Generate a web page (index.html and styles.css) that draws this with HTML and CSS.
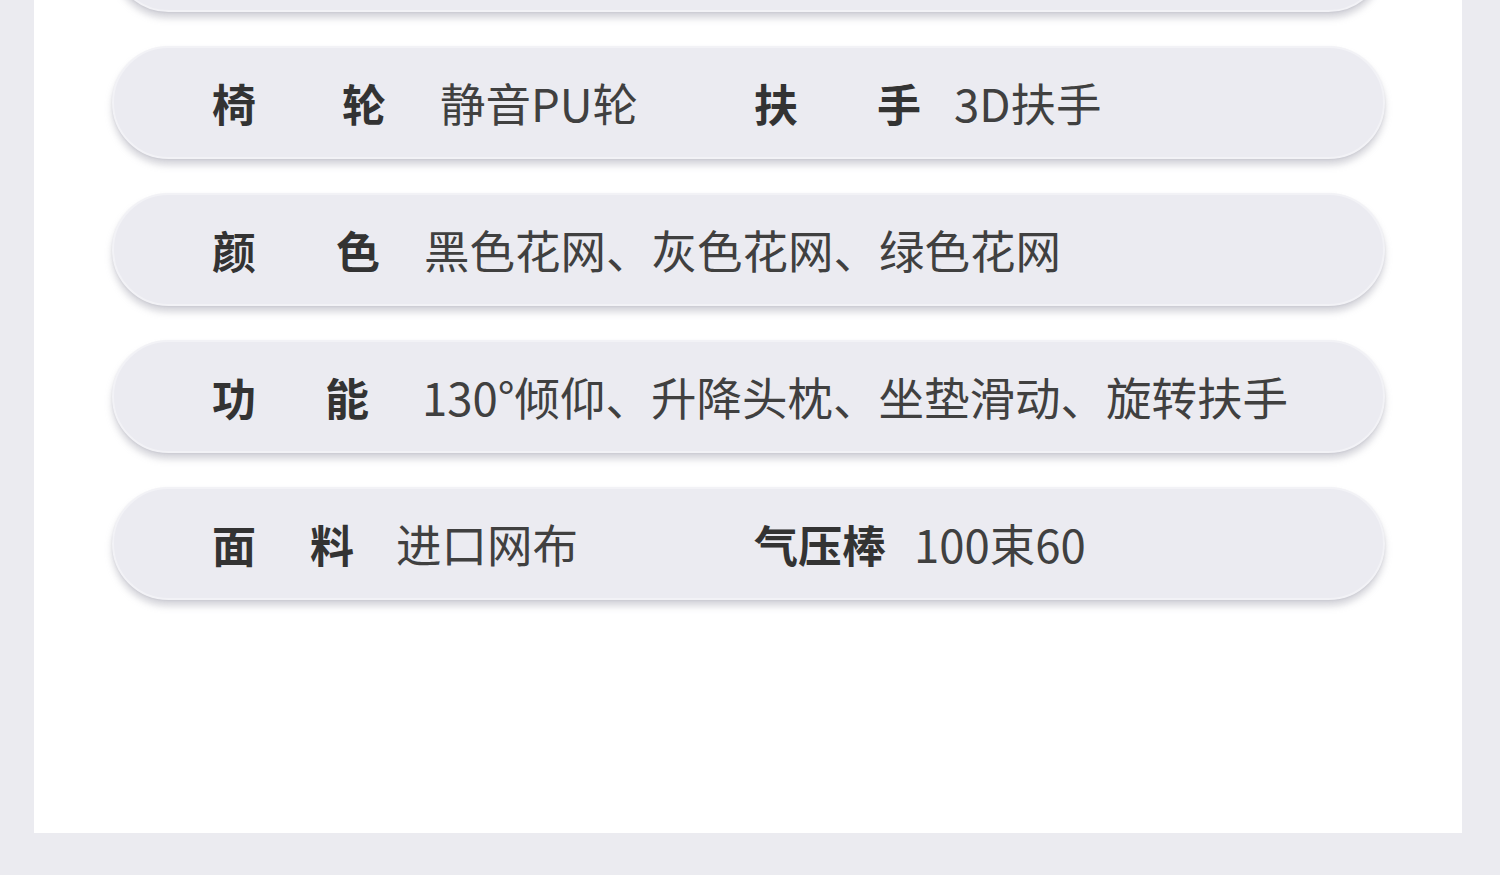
FILE: index.html
```html
<!DOCTYPE html>
<html>
<head>
  <link rel="stylesheet" href="styles.css">
</head>
<body>
  <div class="panel">
    <div class="spec-list">
      <div class="spec-row"></div>

      <div class="spec-row">
        <div class="pair pair-first">
          <span class="label w-174">椅<b>轮</b></span>
          <span class="value gap-54">静音PU轮</span>
        </div>
        <div class="pair">
          <span class="label w-167">扶<b>手</b></span>
          <span class="value gap-33">3D扶手</span>
        </div>
      </div>

      <div class="spec-row">
        <div class="pair">
          <span class="label w-168">颜<b>色</b></span>
          <span class="value gap-44">黑色花网、灰色花网、绿色花网</span>
        </div>
      </div>

      <div class="spec-row">
        <div class="pair">
          <span class="label w-157">功<b>能</b></span>
          <span class="value gap-53">130°倾仰、升降头枕、坐垫滑动、旋转扶手</span>
        </div>
      </div>

      <div class="spec-row">
        <div class="pair pair-first">
          <span class="label w-142">面<b>料</b></span>
          <span class="value gap-42">进口网布</span>
        </div>
        <div class="pair">
          <span class="label">气压棒</span>
          <span class="value gap-28">100束60</span>
        </div>
      </div>
    </div>
  </div>
</body>
</html>
```

FILE: styles.css
```css
body {
  margin: 0;
  background: #ebebf0;
  font-family: "Noto Sans CJK SC", "Noto Sans", sans-serif;
}

.panel {
  width: 1428px;
  height: 833px;
  margin-left: 34px;
  background: #fff;
  overflow: hidden;
}

.spec-list {
  display: flex;
  flex-direction: column;
  gap: 34px;
  margin-top: -101px;
  padding: 0 77px 0 78px;
}

.spec-row {
  height: 113px;
  box-sizing: border-box;
  display: flex;
  align-items: center;
  padding-left: 98px;
  background: #ebebf1;
  border: 2px solid #f2f2f6;
  border-radius: 57px;
  box-shadow: 0 6px 7px rgba(150, 150, 165, 0.4), 0 1px 2px rgba(150, 150, 165, 0.2);
}

.pair {
  display: flex;
  align-items: center;
}

.pair-first {
  width: 542px;
}

.label {
  display: flex;
  justify-content: space-between;
  font-size: 44px;
  font-weight: 700;
  color: #333;
  line-height: 1;
}

.label b {
  font-weight: 700;
}

.value {
  font-size: 45.5px;
  font-weight: 400;
  color: #404040;
  line-height: 1;
}

.w-174 { width: 174px; }
.w-168 { width: 168px; }
.w-167 { width: 167px; }
.w-157 { width: 157px; }
.w-142 { width: 142px; }

.gap-54 { margin-left: 54px; }
.gap-53 { margin-left: 53px; }
.gap-44 { margin-left: 44px; }
.gap-42 { margin-left: 42px; }
.gap-33 { margin-left: 33px; }
.gap-28 { margin-left: 28px; }
```
